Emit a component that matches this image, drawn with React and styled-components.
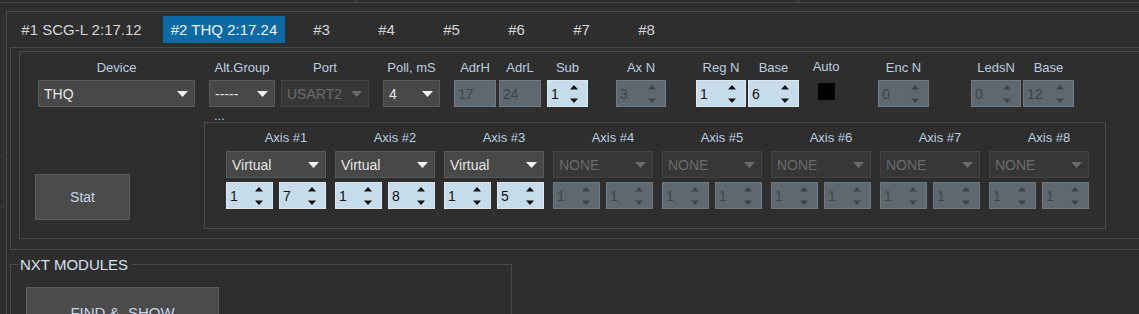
import React from 'react';
import styled, { createGlobalStyle } from 'styled-components';

const LINE = '#494949';
const LABEL = '#bccfe1';

const GlobalStyle = createGlobalStyle`
  html, body {
    margin: 0;
    padding: 0;
    background: #2e2e2e;
  }
  body {
    font-family: "Liberation Sans", Arial, sans-serif;
  }
`;

const Screen = styled.div`
  width: 1139px;
  height: 314px;
  overflow: hidden;
  background: #2e2e2e;
  display: flex;
  flex-direction: column;
`;

const TopStrip = styled.div`
  display: flex;
  height: 3px;
  flex: none;
`;

const TopCell = styled.div`
  box-sizing: border-box;
  height: 3px;
  width: ${(p) => (p.$w ? `${p.$w}px` : 'auto')};
  flex: ${(p) => (p.$w ? 'none' : 1)};
  border-bottom: 1px solid ${LINE};
  border-left: ${(p) => (p.$edge ? `1px solid ${LINE}` : 'none')};
`;

const Body = styled.div`
  display: flex;
  flex: 1;
  margin-top: 8px;
`;

const LeftStrip = styled.div`
  width: 6px;
  flex: none;
  display: flex;
  flex-direction: column;
`;

const LeftStub = styled.div`
  box-sizing: border-box;
  width: 4px;
  height: ${(p) => p.$h}px;
  margin-top: ${(p) => p.$mt || 0}px;
  border-right: 1px solid #3a3a3a;
  border-bottom: 1px solid #3a3a3a;
`;

const Frame = styled.div`
  flex: 1;
  border-top: 1px solid ${LINE};
  border-left: 1px solid ${LINE};
  display: flex;
  flex-direction: column;
`;

const TabBar = styled.div`
  box-sizing: border-box;
  display: flex;
  align-items: flex-start;
  height: 35px;
  padding-top: 4px;
`;

const Tab = styled.div`
  width: ${(p) => p.$w}px;
  margin-left: ${(p) => p.$ml}px;
  height: 27px;
  display: flex;
  align-items: center;
  justify-content: center;
  font-size: 15px;
  white-space: nowrap;
  color: ${(p) => (p.$active ? '#eef4fa' : '#d4d4d4')};
  background: ${(p) => (p.$active ? '#0869a3' : 'transparent')};
`;

const TabPane = styled.div`
  margin-left: 3px;
  border-top: 1px solid ${LINE};
  border-left: 1px solid ${LINE};
  border-bottom: 1px solid ${LINE};
  padding: 3px 0 10px 8px;
`;

const InnerGroup = styled.div`
  box-sizing: border-box;
  height: 188px;
  border-top: 1px solid ${LINE};
  border-left: 1px solid ${LINE};
  border-bottom: 1px solid ${LINE};
  padding-top: 8px;
  display: flex;
  flex-direction: column;
`;

const FieldRow = styled.div`
  display: flex;
  align-items: flex-start;
`;

const Field = styled.div`
  display: flex;
  flex-direction: column;
  align-items: center;
  width: ${(p) => p.$w}px;
  margin-left: ${(p) => p.$ml}px;
  flex: none;
`;

const FieldLabel = styled.div`
  height: 16px;
  line-height: 16px;
  font-size: 13px;
  white-space: nowrap;
  color: ${LABEL};
  margin-top: ${(p) => (p.$raise ? -1 : 0)}px;
  margin-bottom: ${(p) => (p.$raise ? 5 : 4)}px;
`;

const Combo = styled.div`
  box-sizing: border-box;
  width: 100%;
  height: 27px;
  display: flex;
  align-items: center;
  justify-content: space-between;
  padding: 0 6px 0 5px;
  font-size: 14px;
  white-space: nowrap;
  background: ${(p) => (p.$off ? '#373737' : '#484848')};
  border: 1px solid ${(p) => (p.$off ? '#434343' : '#595959')};
  color: ${(p) => (p.$off ? '#6b6b6b' : '#e6e6e6')};
`;

const SpinBox = styled.div`
  box-sizing: border-box;
  width: 100%;
  height: 27px;
  display: flex;
  align-items: center;
  justify-content: space-between;
  padding: 0 9px 0 3px;
  font-size: 14px;
  background: ${(p) => (p.$off ? '#5f686e' : '#c7dcea')};
  border: 1px solid ${(p) => (p.$off ? '#737a7f' : '#dce9f2')};
  color: ${(p) => (p.$off ? '#3d454b' : '#101010')};
`;

const CheckBox = styled.div`
  width: 17px;
  height: 17px;
  margin-top: 3px;
  background: #000;
`;

const BottomRow = styled.div`
  display: flex;
  align-items: flex-start;
  margin-top: 15px;
`;

const StatArea = styled.div`
  width: 184px;
  flex: none;
`;

const Button = styled.div`
  box-sizing: border-box;
  width: ${(p) => p.$w}px;
  height: ${(p) => p.$h}px;
  margin-left: ${(p) => p.$ml}px;
  margin-top: ${(p) => p.$mt}px;
  display: flex;
  align-items: center;
  justify-content: center;
  font-size: ${(p) => p.$fs || 14}px;
  color: #c6d6e6;
  background: #4b4b4b;
  border: 1px solid #5b5b5b;
  white-space: pre;
`;

const AxesBox = styled.div`
  box-sizing: border-box;
  position: relative;
  width: 902px;
  height: 107px;
  border: 1px solid ${LINE};
  padding: 7px 0 0 21px;
  display: flex;
  gap: 9px;
`;

const BoxTitle = styled.span`
  position: absolute;
  left: 9px;
  top: -14px;
  font-size: 13px;
  line-height: 13px;
  color: ${LABEL};
`;

const AxisCol = styled.div`
  width: 100px;
  flex: none;
  display: flex;
  flex-direction: column;
`;

const AxisLabel = styled.div`
  height: 16px;
  line-height: 16px;
  padding-left: 20px;
  text-align: center;
  font-size: 13px;
  white-space: nowrap;
  color: ${LABEL};
  margin-bottom: 5px;
`;

const SpinPair = styled.div`
  display: flex;
  gap: 6px;
  margin-top: 4px;
`;

const SpinSlot = styled.div`
  width: 47px;
`;

const NxtBox = styled.fieldset`
  box-sizing: border-box;
  width: 502px;
  min-width: 0;
  margin: 6px 0 0 3px;
  padding: 0 0 0 8px;
  border: 1px solid ${LINE};
`;

const NxtLegend = styled.legend`
  padding: 0 5px 0 1px;
  font-size: 15px;
  line-height: 17px;
  color: #d4e0ec;
`;

const ComboArrow = ({ off }) => (
  <svg width="11" height="6" viewBox="0 0 11 6">
    <path d="M0 0H11L5.5 6Z" fill={off ? '#6b6b6b' : '#f2f2f2'} />
  </svg>
);

const SpinArrows = ({ off }) => (
  <svg width="8" height="18" viewBox="0 0 8 18">
    <path d="M0 4.5L4 0L8 4.5Z M0 13.5H8L4 18Z" fill={off ? '#3d454b' : '#111'} />
  </svg>
);

const Select = ({ value, off }) => (
  <Combo $off={off}>
    <span>{value}</span>
    <ComboArrow off={off} />
  </Combo>
);

const Spin = ({ value, off }) => (
  <SpinBox $off={off}>
    <span>{value}</span>
    <SpinArrows off={off} />
  </SpinBox>
);

const tabs = [
  { label: '#1 SCG-L 2:17.12', w: 137, ml: 6 },
  { label: '#2 THQ 2:17.24', w: 122, ml: 13, active: true },
  { label: '#3', w: 65, ml: 4 },
  { label: '#4', w: 65, ml: 0 },
  { label: '#5', w: 65, ml: 0 },
  { label: '#6', w: 65, ml: 0 },
  { label: '#7', w: 65, ml: 0 },
  { label: '#8', w: 65, ml: 0 },
];

const axes = [
  { mode: 'Virtual', a: '1', b: '7' },
  { mode: 'Virtual', a: '1', b: '8' },
  { mode: 'Virtual', a: '1', b: '5' },
  { mode: 'NONE', a: '1', b: '1', off: true },
  { mode: 'NONE', a: '1', b: '1', off: true },
  { mode: 'NONE', a: '1', b: '1', off: true },
  { mode: 'NONE', a: '1', b: '1', off: true },
  { mode: 'NONE', a: '1', b: '1', off: true },
];

export default function App() {
  return (
    <>
      <GlobalStyle />
      <Screen>
        <TopStrip>
          <TopCell $w={356} />
          <TopCell $w={442} $edge />
          <TopCell $edge />
        </TopStrip>
        <Body>
          <LeftStrip>
            <LeftStub $h={137} $mt={8} />
            <LeftStub $h={52} $mt={0} />
          </LeftStrip>
          <Frame>
            <TabBar>
              {tabs.map((t) => (
                <Tab key={t.label} $w={t.w} $ml={t.ml} $active={t.active}>
                  {t.label}
                </Tab>
              ))}
            </TabBar>
            <TabPane>
              <InnerGroup>
                <FieldRow>
                  <Field $w={157} $ml={18}>
                    <FieldLabel>Device</FieldLabel>
                    <Select value="THQ" />
                  </Field>
                  <Field $w={66} $ml={14}>
                    <FieldLabel>Alt.Group</FieldLabel>
                    <Select value="-----" />
                  </Field>
                  <Field $w={88} $ml={6}>
                    <FieldLabel>Port</FieldLabel>
                    <Select value="USART2" off />
                  </Field>
                  <Field $w={57} $ml={14}>
                    <FieldLabel>Poll, mS</FieldLabel>
                    <Select value="4" />
                  </Field>
                  <Field $w={42} $ml={14}>
                    <FieldLabel>AdrH</FieldLabel>
                    <SpinBox $off>17</SpinBox>
                  </Field>
                  <Field $w={42} $ml={3}>
                    <FieldLabel>AdrL</FieldLabel>
                    <SpinBox $off>24</SpinBox>
                  </Field>
                  <Field $w={41} $ml={6}>
                    <FieldLabel>Sub</FieldLabel>
                    <Spin value="1" />
                  </Field>
                  <Field $w={50} $ml={28}>
                    <FieldLabel>Ax N</FieldLabel>
                    <Spin value="3" off />
                  </Field>
                  <Field $w={50} $ml={30}>
                    <FieldLabel>Reg N</FieldLabel>
                    <Spin value="1" />
                  </Field>
                  <Field $w={51} $ml={2}>
                    <FieldLabel>Base</FieldLabel>
                    <Spin value="6" />
                  </Field>
                  <Field $w={28} $ml={13}>
                    <FieldLabel $raise>Auto</FieldLabel>
                    <CheckBox />
                  </Field>
                  <Field $w={51} $ml={38}>
                    <FieldLabel>Enc N</FieldLabel>
                    <Spin value="0" off />
                  </Field>
                  <Field $w={50} $ml={42}>
                    <FieldLabel>LedsN</FieldLabel>
                    <Spin value="0" off />
                  </Field>
                  <Field $w={51} $ml={2}>
                    <FieldLabel>Base</FieldLabel>
                    <Spin value="12" off />
                  </Field>
                </FieldRow>
                <BottomRow>
                  <StatArea>
                    <Button $w={95} $h={46} $ml={15} $mt={52}>Stat</Button>
                  </StatArea>
                  <AxesBox>
                    <BoxTitle>...</BoxTitle>
                    {axes.map((ax, i) => (
                      <AxisCol key={i}>
                        <AxisLabel>{`Axis #${i + 1}`}</AxisLabel>
                        <Select value={ax.mode} off={ax.off} />
                        <SpinPair>
                          <SpinSlot>
                            <Spin value={ax.a} off={ax.off} />
                          </SpinSlot>
                          <SpinSlot>
                            <Spin value={ax.b} off={ax.off} />
                          </SpinSlot>
                        </SpinPair>
                      </AxisCol>
                    ))}
                  </AxesBox>
                </BottomRow>
              </InnerGroup>
            </TabPane>
            <NxtBox>
              <NxtLegend>NXT MODULES</NxtLegend>
              <Button $w={193} $h={50} $ml={7} $mt={14} $fs={15}>FIND &amp;  SHOW</Button>
            </NxtBox>
          </Frame>
        </Body>
      </Screen>
    </>
  );
}
